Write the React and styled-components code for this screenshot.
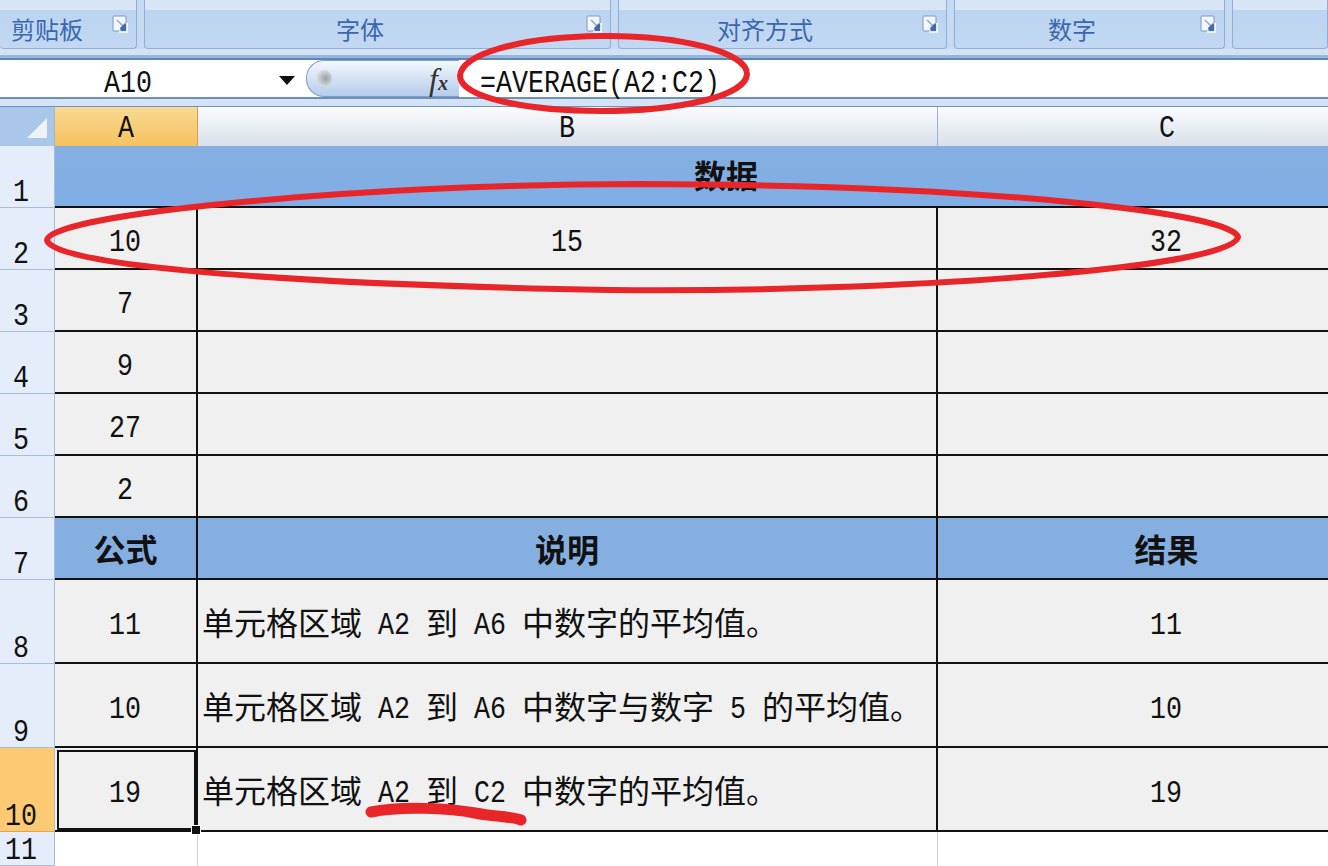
import React from "react";
import styled, { createGlobalStyle } from "styled-components";

const Global = createGlobalStyle`
  html, body { margin: 0; padding: 0; background: #fff; }
  body { width: 1328px; height: 866px; overflow: hidden; font-family: "Liberation Mono", "Noto Sans CJK SC", monospace; color: #111; }
`;

const Page = styled.div`
  position: relative;
  width: 1328px;
  height: 866px;
  overflow: hidden;
  background: #fff;
`;

const Ribbon = styled.div`
  display: flex;
  gap: 7px;
  height: 49px;
  background: #c6daf2;
`;

const RibbonGroup = styled.div`
  position: relative;
  box-sizing: border-box;
  flex: ${(p) => (p.$w ? `0 0 ${p.$w}px` : "1")};
  height: 49px;
  padding: 10px ${(p) => p.$right || 0}px 0 0;
  background: linear-gradient(#d8e5f5 0 10px, #bcd4f0 10px, #c2d8f2 100%);
  border: 1px solid #8fb0d6;
  border-top: 0;
  border-left-width: ${(p) => (p.$first ? 0 : 1)}px;
  border-radius: 0 0 4px 4px;
  color: #3a67ae;
  font: 24px/38px "Noto Sans CJK SC", sans-serif;
  text-align: center;
`;

const Launcher = styled.svg`
  position: absolute;
  top: 15px;
  right: 7px;
  width: 17px;
  height: 18px;
`;

const RibbonGap = styled.div`
  height: 6px;
  background: #d3e2f4;
`;

const BarAccent = styled.div`
  box-sizing: border-box;
  height: 5px;
  background: #97b6dc;
  border-bottom: 2px solid #5f86b8;
`;

const FormulaBar = styled.div`
  display: flex;
  box-sizing: border-box;
  height: 39px;
  border-bottom: 2px solid #6d8fb9;
  background: #fff;
`;

const NameBox = styled.div`
  position: relative;
  display: flex;
  align-items: center;
  box-sizing: border-box;
  flex: 0 0 306px;
  padding: 4px 0 0 104px;
`;

const Caret = styled.span`
  position: absolute;
  left: 279px;
  top: 16px;
  border-left: 8px solid transparent;
  border-right: 8px solid transparent;
  border-top: 9px solid #111;
`;

const FxPill = styled.div`
  position: relative;
  display: flex;
  align-items: center;
  justify-content: flex-end;
  box-sizing: border-box;
  flex: 0 0 153px;
  padding-right: 11px;
  border: 1px solid #7f9fc8;
  border-right: 0;
  border-radius: 18px 0 0 18px;
  background: linear-gradient(#f4f8fd, #b5cceb);
`;

const Knob = styled.span`
  position: absolute;
  left: 9px;
  top: 9px;
  width: 16px;
  height: 17px;
  border-radius: 50%;
  background: radial-gradient(circle at 60% 50%, #9aa1a8, #e6ebf1 85%);
`;

const FxLabel = styled.span`
  font: italic 400 32px/1 "Liberation Serif", serif;
  color: #333;
  span { font-size: 20px; font-weight: 700; }
`;

const FormulaInput = styled.div`
  flex: 1;
  padding: 4px 0 0 21px;
  display: flex;
  align-items: center;
`;

const BarGap = styled.div`
  height: 7px;
  background: #d3e2f4;
  border-bottom: 1px solid #6f94c2;
`;

const Sheet = styled.div`
  display: grid;
  width: 1397px;
  grid-template-columns: 55px 143px 740px 459px;
  grid-template-rows: 39px repeat(7, 62px) repeat(3, 84px) 34px;
`;

const Corner = styled.div`
  position: relative;
  background: #a9c7e9;
  border-right: 1px solid #9db6d3;
  &::after {
    content: "";
    position: absolute;
    left: 27px;
    top: 11px;
    border-left: 20px solid transparent;
    border-bottom: 20px solid #eef2f7;
  }
`;

const ColHead = styled.div`
  display: flex;
  align-items: center;
  justify-content: center;
  box-sizing: border-box;
  padding-bottom: 1px;
  border-right: 1px solid ${(p) => (p.$active ? "#e09a4a" : "#9fb3c9")};
  background: ${(p) =>
    p.$active
      ? "linear-gradient(#f8d992, #f6c25f)"
      : "linear-gradient(#fbfcfd, #d9e0ea)"};
`;

const RowHead = styled.div`
  display: flex;
  align-items: flex-end;
  justify-content: center;
  box-sizing: border-box;
  padding: 0 11px 1px 0;
  border-right: 1px solid #a9bcd3;
  border-bottom: 1px solid ${(p) => (p.$active ? "#e3a24f" : "#a9bcd3")};
  background: ${(p) => (p.$active ? "#fbca73" : "#e4edf9")};
`;

const Cell = styled.div`
  display: flex;
  align-items: center;
  justify-content: ${(p) => (p.$left ? "flex-start" : "center")};
  box-sizing: border-box;
  min-width: 0;
  padding-left: ${(p) => (p.$left ? 4 : 0)}px;
  padding-top: ${(p) => (p.$left ? 0 : 3)}px;
  background: #f0f0f0;
  border-right: 2px solid #111;
  border-bottom: 2px solid #111;
  white-space: pre;
`;

const HeadCell = styled(Cell)`
  padding-top: 0;
  background: #85afe0;
  font: 700 32px/1 "Noto Sans CJK SC", sans-serif;
  grid-column: ${(p) => p.$span || "auto"};
`;

const TitleCell = styled(HeadCell)`
  border-right: 0;
  align-items: flex-start;
  padding-top: 12px;
  background: linear-gradient(#85afe0, #80ade6);
`;

const SelectedCell = styled(Cell)`
  position: relative;
  outline: 2px solid #111;
  outline-offset: -4px;
`;

const FillHandle = styled.span`
  position: absolute;
  right: -5px;
  bottom: -5px;
  width: 8px;
  height: 8px;
  background: #111;
  border: 1px solid #fff;
`;

const Zh = styled.span`
  font: 400 32px/1 "Noto Sans CJK SC", sans-serif;
`;

/* SimSun-like half-width latin: mono glyphs narrowed to a 16px advance */
const NarrowBox = styled.span`
  display: inline-block;
  font: 400 32px/32px "Liberation Mono", monospace;
  white-space: pre;
  transform: translateY(${(p) => p.$dy}px) scaleX(0.8333);
  transform-origin: 0 50%;
  margin-right: ${(p) => (-19.2 * p.$n) / 6}px;
`;

const T = ({ children, dy = 3 }) => (
  <NarrowBox $n={children.length} $dy={dy}>
    {children}
  </NarrowBox>
);

const EmptyCell = styled.div`
  border-right: 1px solid #cdd3da;
  background: #fff;
`;

const Overlay = styled.svg`
  position: absolute;
  left: 0;
  top: 0;
  pointer-events: none;
`;

const Dialog = () => (
  <Launcher viewBox="0 0 17 18">
    <rect x="1" y="1" width="13" height="15" rx="1" fill="#f3f7fc" stroke="#7d98bd" />
    <path d="M5 5l6 6" stroke="#8fa9c9" strokeWidth="1.5" />
    <path d="M8 13l5-5 2 3-1 5H9z" fill="#3f6cae" />
    <path d="M15 8v9H7" fill="none" stroke="#fff" strokeWidth="1.5" />
  </Launcher>
);

const Desc = ({ parts }) => (
  <Cell $left>
    {parts.map((p, i) => (i % 2 === 0 ? <Zh key={i}>{p}</Zh> : <T key={i} dy={5}>{p}</T>))}
  </Cell>
);

const rows = [
  [2, "10", "15", "32"],
  [3, "7", "", ""],
  [4, "9", "", ""],
  [5, "27", "", ""],
  [6, "2", "", ""],
];

export default function App() {
  return (
    <Page>
      <Global />
      <Ribbon>
        <RibbonGroup $w={137} $first $right={42}>
          剪贴板
          <Dialog />
        </RibbonGroup>
        <RibbonGroup $w={467} $right={35}>
          字体
          <Dialog />
        </RibbonGroup>
        <RibbonGroup $w={329} $right={35}>
          对齐方式
          <Dialog />
        </RibbonGroup>
        <RibbonGroup $w={271} $right={35}>
          数字
          <Dialog />
        </RibbonGroup>
        <RibbonGroup />
      </Ribbon>
      <RibbonGap />
      <BarAccent />
      <FormulaBar>
        <NameBox>
          <T>A10</T>
          <Caret />
        </NameBox>
        <FxPill>
          <Knob />
          <FxLabel>
            f<span>x</span>
          </FxLabel>
        </FxPill>
        <FormulaInput>
          <T>=AVERAGE(A2:C2)</T>
        </FormulaInput>
      </FormulaBar>
      <BarGap />
      <Sheet>
        <Corner />
        <ColHead $active><T>A</T></ColHead>
        <ColHead><T>B</T></ColHead>
        <ColHead><T>C</T></ColHead>

        <RowHead><T>1</T></RowHead>
        <TitleCell $span="2 / span 3">数据</TitleCell>

        {rows.map(([n, a, b, c]) => (
          <React.Fragment key={n}>
            <RowHead><T>{String(n)}</T></RowHead>
            <Cell><T>{a}</T></Cell>
            <Cell>{b && <T>{b}</T>}</Cell>
            <Cell>{c && <T>{c}</T>}</Cell>
          </React.Fragment>
        ))}

        <RowHead><T>7</T></RowHead>
        <HeadCell>公式</HeadCell>
        <HeadCell>说明</HeadCell>
        <HeadCell>结果</HeadCell>

        <RowHead><T>8</T></RowHead>
        <Cell><T>11</T></Cell>
        <Desc parts={["单元格区域", " A2 ", "到", " A6 ", "中数字的平均值。"]} />
        <Cell><T>11</T></Cell>

        <RowHead><T>9</T></RowHead>
        <Cell><T>10</T></Cell>
        <Desc parts={["单元格区域", " A2 ", "到", " A6 ", "中数字与数字", " 5 ", "的平均值。"]} />
        <Cell><T>10</T></Cell>

        <RowHead $active><T>10</T></RowHead>
        <SelectedCell>
          <T>19</T>
          <FillHandle />
        </SelectedCell>
        <Desc parts={["单元格区域", " A2 ", "到", " C2 ", "中数字的平均值。"]} />
        <Cell><T>19</T></Cell>

        <RowHead><T>11</T></RowHead>
        <EmptyCell />
        <EmptyCell />
        <EmptyCell />
      </Sheet>
      <Overlay width="1328" height="866" viewBox="0 0 1328 866" fill="none" stroke="#e8262a" strokeLinecap="round">
        <path
          d="M600 36C520 37 461 54 460 76C460 98 530 111 600 111C680 111 746 96 747 74C747 52 680 35 600 36Z"
          strokeWidth="6"
        />
        <path
          d="M640 184C360 184 50 214 47 240C50 262 230 283 610 290C900 293 1232 268 1238 237C1232 214 1000 185 640 184Z"
          strokeWidth="6"
        />
        <path d="M371 812C400 806 450 808 475 813C495 817 510 816 521 820" strokeWidth="11" />
      </Overlay>
    </Page>
  );
}
